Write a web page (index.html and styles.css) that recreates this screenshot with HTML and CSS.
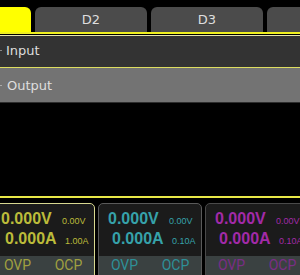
FILE: index.html
```html
<!DOCTYPE html>
<html lang="en">
<head>
    <meta charset="UTF-8">
    <meta name="viewport" content="width=device-width, initial-scale=1.0">
    <title>Power Supply</title>
    <link rel="stylesheet" href="styles.css">
</head>
<body>
    <div class="tabs">
        <div class="tab active">D1</div>
        <div class="tab">D2</div>
        <div class="tab">D3</div>
        <div class="tab">D4</div>
    </div>
    <div class="tab-line"></div>

    <div class="menu-row input"><span class="mark"></span>Input</div>
    <div class="menu-row output"><span class="mark"></span>Output</div>

    <div class="spacer"></div>
    <div class="bottom-line"></div>

    <div class="channels">
        <div class="channel ch1">
            <div class="readout">
                <div class="row"><span class="big">0.000V</span><span class="small">0.00V</span></div>
                <div class="row shift"><span class="big">0.000A</span><span class="small">1.00A</span></div>
            </div>
            <div class="strip"><span>OVP</span><span>OCP</span></div>
        </div>
        <div class="channel ch2">
            <div class="readout">
                <div class="row"><span class="big">0.000V</span><span class="small">0.00V</span></div>
                <div class="row shift"><span class="big">0.000A</span><span class="small">0.10A</span></div>
            </div>
            <div class="strip"><span>OVP</span><span>OCP</span></div>
        </div>
        <div class="channel ch3">
            <div class="readout">
                <div class="row"><span class="big">0.000V</span><span class="small">0.00V</span></div>
                <div class="row shift"><span class="big">0.000A</span><span class="small">0.10A</span></div>
            </div>
            <div class="strip"><span>OVP</span><span>OCP</span></div>
        </div>
    </div>
</body>
</html>
```

FILE: styles.css
```css
body {
    margin: 0;
    width: 300px;
    height: 275px;
    overflow: hidden;
    background: #000;
    color: #dedede;
    font-family: "DejaVu Sans", sans-serif;
}
.tabs {
    display: flex;
    gap: 4px;
    padding-top: 7px;
    margin-left: -81px;
}
.tab {
    flex: 0 0 112px;
    height: 25px;
    line-height: 25px;
    text-align: center;
    font-size: 13px;
    background: #4b4b4b;
    border-radius: 6px 6px 0 0;
}
.tab.active {
    background: #ffff00;
    color: #ffff00;
}
.tab-line {
    height: 2px;
    background: #f0f020;
    margin-bottom: 1px;
}
.menu-row {
    display: flex;
    align-items: center;
    font-size: 13px;
    padding-left: 6px;
}
.mark {
    width: 2px;
    height: 1px;
    background: #888;
    margin-left: -6px;
    margin-right: 4px;
}
.input {
    height: 33px;
    padding-bottom: 2px;
    box-sizing: border-box;
    background: #333;
    border-top: 1px solid #e4e4b0;
    border-bottom: 1px solid #dede60;
}
.output {
    height: 34px;
    padding-left: 7px;
    background: #737373;
    border-bottom: 1px solid #2e2e2e;
}
.output .mark {
    margin-left: -7px;
    margin-right: 5px;
    background: #aaa;
}
.spacer {
    height: 93px;
}
.bottom-line {
    height: 2px;
    background: #e8e848;
    margin-bottom: 5px;
}
.channels {
    display: flex;
    gap: 3px;
    margin-left: -9px;
}
.channel {
    flex: 0 0 104px;
    box-sizing: border-box;
    height: 80px;
    background: #1b1b1b;
    border: 1px solid #4e4e4e;
    border-radius: 5px 5px 0 0;
    overflow: hidden;
    font-family: "Liberation Sans", sans-serif;
}
.readout {
    padding: 6px 0 6px 9px;
}
.row {
    display: flex;
    align-items: baseline;
    line-height: 17px;
}
.row.shift {
    padding-left: 4px;
}
.big {
    width: 61px;
    font-size: 16px;
    font-weight: bold;
}
.small {
    font-size: 9px;
}
.row.shift .big {
    width: 60px;
}
.strip {
    display: flex;
    height: 25px;
    background: #3a4141;
    font-family: Roboto, sans-serif;
    font-size: 14px;
    line-height: 19px;
}
.strip span {
    flex: 1;
    text-align: center;
}
.ch1 {
    color: #bcbc3a;
    border-color: #d8d890;
}
.ch1 .strip {
    color: #a0a040;
}
.ch2 {
    color: #36a2aa;
    border-color: #5a5a5a;
}
.ch2 .strip {
    color: #2e9098;
}
.ch3 {
    color: #a22aa8;
    border-color: #4a4a4a;
}
.ch3 .strip {
    color: #7a2e86;
}
```
